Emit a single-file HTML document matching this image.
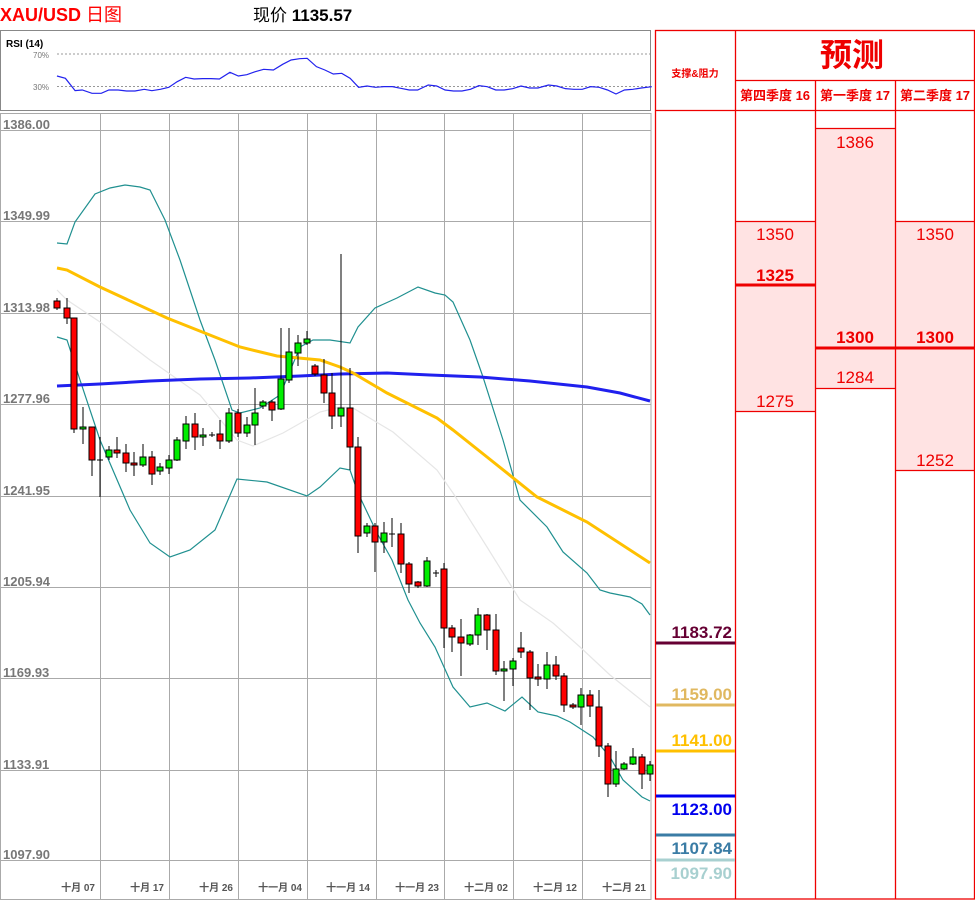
<!DOCTYPE html>
<html><head><meta charset="utf-8"><style>
html,body{margin:0;padding:0;background:#fff;width:975px;height:900px;overflow:hidden}
svg{display:block}
text{font-family:"Liberation Sans","Noto Sans CJK SC",sans-serif}
</style></head><body>
<svg width="975" height="900" viewBox="0 0 975 900" xmlns="http://www.w3.org/2000/svg">
<text x="0" y="21" font-size="18" font-weight="bold" fill="#f00">XAU/USD <tspan font-weight="normal">日图</tspan></text>
<text x="253" y="21" font-size="17" fill="#000">现价 <tspan font-weight="bold">1135.57</tspan></text>

<rect x="0.5" y="30.5" width="650" height="80" fill="#fff" stroke="#888"/>
<text x="6" y="47" font-size="10" font-weight="bold" fill="#000">RSI (14)</text>
<text x="33" y="58" font-size="8" fill="#777">70%</text>
<text x="33" y="90" font-size="8" fill="#777">30%</text>
<line x1="57" y1="54" x2="650" y2="54" stroke="#777" stroke-dasharray="2,2" stroke-width="0.8"/>
<line x1="57" y1="86.5" x2="650" y2="86.5" stroke="#777" stroke-dasharray="2,2" stroke-width="0.8"/>
<g transform="scale(0.4219,0.3333)">
<polyline vector-effect="non-scaling-stroke" fill="none" stroke="#2222ee" stroke-width="1.2" points="135,228 155,235 178,272 195,270 218,280 240,280 258,270 280,270 300,273 320,273 342,268 360,272 380,268 400,262 420,245 440,232 460,237 480,236 500,236 520,237 545,217 565,228 585,224 605,215 625,208 648,210 670,193 690,180 710,176 728,175 750,200 770,210 790,222 810,220 830,235 850,262 870,258 890,262 910,260 930,260 950,265 970,270 990,270 1015,255 1035,258 1055,270 1075,273 1095,273 1115,268 1135,257 1155,260 1175,270 1195,270 1215,266 1235,258 1255,264 1275,264 1300,255 1320,258 1340,266 1360,268 1380,268 1400,260 1420,262 1440,270 1460,282 1480,270 1500,268 1520,264 1545,260"/>
</g>

<rect x="0.5" y="113.5" width="650.5" height="786" fill="#fff" stroke="#aaa"/>
<g stroke="#aaa" stroke-width="1">
<line x1="1" y1="130.5" x2="651" y2="130.5"/>
<line x1="1" y1="221.5" x2="651" y2="221.5"/>
<line x1="1" y1="313.5" x2="651" y2="313.5"/>
<line x1="1" y1="404.5" x2="651" y2="404.5"/>
<line x1="1" y1="496.5" x2="651" y2="496.5"/>
<line x1="1" y1="587.5" x2="651" y2="587.5"/>
<line x1="1" y1="678.5" x2="651" y2="678.5"/>
<line x1="1" y1="770.5" x2="651" y2="770.5"/>
<line x1="1" y1="860.5" x2="651" y2="860.5"/>
<line x1="100.5" y1="114" x2="100.5" y2="899"/>
<line x1="169.5" y1="114" x2="169.5" y2="899"/>
<line x1="238.5" y1="114" x2="238.5" y2="899"/>
<line x1="307.5" y1="114" x2="307.5" y2="899"/>
<line x1="376.5" y1="114" x2="376.5" y2="899"/>
<line x1="444.5" y1="114" x2="444.5" y2="899"/>
<line x1="513.5" y1="114" x2="513.5" y2="899"/>
<line x1="582.5" y1="114" x2="582.5" y2="899"/>
</g>
<g font-size="13" font-weight="bold" fill="#777">
<text x="3" y="129">1386.00</text>
<text x="3" y="220">1349.99</text>
<text x="3" y="312">1313.98</text>
<text x="3" y="403">1277.96</text>
<text x="3" y="495">1241.95</text>
<text x="3" y="586">1205.94</text>
<text x="3" y="677">1169.93</text>
<text x="3" y="769">1133.91</text>
<text x="3" y="859">1097.90</text>
</g>
<g font-size="10" font-weight="bold" fill="#555" text-anchor="end">
<text x="95" y="891">十月 07</text>
<text x="164" y="891">十月 17</text>
<text x="233" y="891">十月 26</text>
<text x="302" y="891">十一月 04</text>
<text x="370" y="891">十一月 14</text>
<text x="439" y="891">十一月 23</text>
<text x="508" y="891">十二月 02</text>
<text x="577" y="891">十二月 12</text>
<text x="646" y="891">十二月 21</text>
</g>

<polyline fill="none" stroke="#e6e6e6" stroke-width="1.2" points="57,290 67,300 100,322 150,360 200,395 237,440 253,446 283,433 320,412 340,407 353,408 393,432 437,470 453,493 487,547 520,600 553,623 580,647 610,675 650,707"/>
<polyline fill="none" stroke="#209090" stroke-width="1.2" points="57,243 67,244 75,222 95,194 110,188 125,185 140,187 150,190 165,220 180,260 200,320 215,360 232,410 240,413 260,408 280,395 300,347 313,340 330,340 350,343 358,327 375,308 397,298 418,287 435,293 445,295 453,302 470,340 483,377 503,440 520,500 547,527 563,552 587,573 600,590 610,593 630,597 642,604 650,615"/>
<polyline fill="none" stroke="#209090" stroke-width="1.2" points="57,337 67,340 80,380 100,440 130,510 150,543 170,557 190,550 215,530 237,479 267,482 307,496 320,487 340,468 350,470 358,493 377,533 392,560 408,600 420,623 435,647 453,687 470,707 487,703 505,711 522,697 538,712 557,716 570,722 593,737 610,757 623,780 642,797 650,801"/>
<polyline fill="none" stroke="#2020ee" stroke-width="3" points="57,386 100,384 150,381 200,379 250,378 300,376 340,374 387,373 430,375 480,377 530,381 587,387 620,393 650,401"/>
<polyline fill="none" stroke="#ffc000" stroke-width="3" points="57,268 67,270 100,287 167,318 240,347 277,356 320,360 340,367 353,373 387,393 437,418 453,430 487,457 537,497 587,522 650,563"/>

<g stroke="#000" stroke-width="1">
<line x1="57" y1="298" x2="57" y2="310"/><rect x="54" y="301" width="6" height="7" fill="#f00"/>
<line x1="67" y1="298" x2="67" y2="324"/><rect x="64" y="308" width="6" height="10" fill="#f00"/>
<line x1="74" y1="318" x2="74" y2="433"/><rect x="71" y="318" width="6" height="111" fill="#f00"/>
<line x1="83" y1="407" x2="83" y2="444"/><rect x="80" y="427" width="6" height="2" fill="#0e0"/>
<line x1="92" y1="427" x2="92" y2="476"/><rect x="89" y="427" width="6" height="33" fill="#f00"/>
<line x1="100" y1="437" x2="100" y2="497"/><line x1="97" y1="460" x2="103" y2="460"/>
<line x1="109" y1="446" x2="109" y2="460"/><rect x="106" y="450" width="6" height="7" fill="#0e0"/>
<line x1="117" y1="437" x2="117" y2="458"/><rect x="114" y="450" width="6" height="3" fill="#f00"/>
<line x1="126" y1="444" x2="126" y2="472"/><rect x="123" y="453" width="6" height="10" fill="#f00"/>
<line x1="134" y1="452" x2="134" y2="476"/><rect x="131" y="463" width="6" height="2" fill="#f00"/>
<line x1="143" y1="444" x2="143" y2="467"/><rect x="140" y="457" width="6" height="8" fill="#0e0"/>
<line x1="152" y1="451" x2="152" y2="485"/><rect x="149" y="457" width="6" height="17" fill="#f00"/>
<line x1="160" y1="463" x2="160" y2="475"/><rect x="157" y="467" width="6" height="4" fill="#0e0"/>
<line x1="169" y1="455" x2="169" y2="474"/><rect x="166" y="460" width="6" height="8" fill="#0e0"/>
<line x1="177" y1="437" x2="177" y2="461"/><rect x="174" y="440" width="6" height="20" fill="#0e0"/>
<line x1="186" y1="416" x2="186" y2="449"/><rect x="183" y="424" width="6" height="17" fill="#0e0"/>
<line x1="195" y1="413" x2="195" y2="450"/><rect x="192" y="424" width="6" height="13" fill="#f00"/>
<line x1="203" y1="428" x2="203" y2="446"/><rect x="200" y="435" width="6" height="2" fill="#0e0"/>
<line x1="212" y1="432" x2="212" y2="437"/><line x1="209" y1="435" x2="215" y2="435"/>
<line x1="220" y1="420" x2="220" y2="449"/><rect x="217" y="434" width="6" height="7" fill="#f00"/>
<line x1="229" y1="408" x2="229" y2="443"/><rect x="226" y="413" width="6" height="28" fill="#0e0"/>
<line x1="238" y1="409" x2="238" y2="437"/><rect x="235" y="413" width="6" height="20" fill="#f00"/>
<line x1="247" y1="417" x2="247" y2="437"/><rect x="244" y="425" width="6" height="8" fill="#0e0"/>
<line x1="255" y1="388" x2="255" y2="445"/><rect x="252" y="413" width="6" height="12" fill="#0e0"/>
<line x1="263" y1="400" x2="263" y2="409"/><rect x="260" y="402" width="6" height="4" fill="#0e0"/>
<line x1="272" y1="400" x2="272" y2="421"/><rect x="269" y="402" width="6" height="8" fill="#f00"/>
<line x1="281" y1="328" x2="281" y2="410"/><rect x="278" y="379" width="6" height="30" fill="#0e0"/>
<line x1="289" y1="328" x2="289" y2="383"/><rect x="286" y="352" width="6" height="28" fill="#0e0"/>
<line x1="298" y1="335" x2="298" y2="366"/><rect x="295" y="343" width="6" height="10" fill="#0e0"/>
<line x1="307" y1="331" x2="307" y2="345"/><rect x="304" y="339" width="6" height="4" fill="#0e0"/>
<line x1="315" y1="364" x2="315" y2="376"/><rect x="312" y="366" width="6" height="8" fill="#f00"/>
<line x1="324" y1="359" x2="324" y2="403"/><rect x="321" y="375" width="6" height="18" fill="#f00"/>
<line x1="332" y1="373" x2="332" y2="429"/><rect x="329" y="393" width="6" height="23" fill="#f00"/>
<line x1="341" y1="254" x2="341" y2="427"/><rect x="338" y="408" width="6" height="8" fill="#0e0"/>
<line x1="350" y1="368" x2="350" y2="470"/><rect x="347" y="408" width="6" height="39" fill="#f00"/>
<line x1="358" y1="437" x2="358" y2="553"/><rect x="355" y="447" width="6" height="89" fill="#f00"/>
<line x1="367" y1="523" x2="367" y2="537"/><rect x="364" y="526" width="6" height="7" fill="#0e0"/>
<line x1="375" y1="523" x2="375" y2="572"/><rect x="372" y="526" width="6" height="16" fill="#f00"/>
<line x1="384" y1="522" x2="384" y2="553"/><rect x="381" y="533" width="6" height="9" fill="#0e0"/>
<line x1="392" y1="518" x2="392" y2="547"/><line x1="389" y1="534" x2="395" y2="534"/>
<line x1="401" y1="523" x2="401" y2="573"/><rect x="398" y="534" width="6" height="30" fill="#f00"/>
<line x1="409" y1="562" x2="409" y2="593"/><rect x="406" y="564" width="6" height="20" fill="#f00"/>
<line x1="418" y1="581" x2="418" y2="588"/><rect x="415" y="582" width="6" height="4" fill="#f00"/>
<line x1="427" y1="557" x2="427" y2="587"/><rect x="424" y="561" width="6" height="25" fill="#0e0"/>
<line x1="436" y1="570" x2="436" y2="577"/><line x1="433" y1="573" x2="439" y2="573"/>
<line x1="444" y1="563" x2="444" y2="648"/><rect x="441" y="569" width="6" height="59" fill="#f00"/>
<line x1="452" y1="625" x2="452" y2="652"/><rect x="449" y="628" width="6" height="9" fill="#f00"/>
<line x1="461" y1="619" x2="461" y2="676"/><rect x="458" y="637" width="6" height="6" fill="#f00"/>
<line x1="470" y1="634" x2="470" y2="646"/><rect x="467" y="635" width="6" height="9" fill="#0e0"/>
<line x1="478" y1="608" x2="478" y2="645"/><rect x="475" y="615" width="6" height="20" fill="#0e0"/>
<line x1="487" y1="614" x2="487" y2="650"/><rect x="484" y="615" width="6" height="15" fill="#f00"/>
<line x1="496" y1="614" x2="496" y2="675"/><rect x="493" y="630" width="6" height="41" fill="#f00"/>
<line x1="504" y1="661" x2="504" y2="701"/><rect x="501" y="669" width="6" height="2" fill="#0e0"/>
<line x1="513" y1="658" x2="513" y2="686"/><rect x="510" y="661" width="6" height="8" fill="#0e0"/>
<line x1="521" y1="632" x2="521" y2="658"/><rect x="518" y="648" width="6" height="4" fill="#f00"/>
<line x1="530" y1="650" x2="530" y2="710"/><rect x="527" y="652" width="6" height="26" fill="#f00"/>
<line x1="538" y1="664" x2="538" y2="686"/><rect x="535" y="677" width="6" height="2" fill="#f00"/>
<line x1="547" y1="652" x2="547" y2="689"/><rect x="544" y="665" width="6" height="14" fill="#0e0"/>
<line x1="556" y1="656" x2="556" y2="680"/><rect x="553" y="665" width="6" height="11" fill="#f00"/>
<line x1="564" y1="673" x2="564" y2="712"/><rect x="561" y="676" width="6" height="29" fill="#f00"/>
<line x1="573" y1="703" x2="573" y2="709"/><rect x="570" y="705" width="6" height="2" fill="#f00"/>
<line x1="581" y1="688" x2="581" y2="725"/><rect x="578" y="695" width="6" height="12" fill="#0e0"/>
<line x1="590" y1="690" x2="590" y2="717"/><rect x="587" y="695" width="6" height="11" fill="#f00"/>
<line x1="599" y1="690" x2="599" y2="757"/><rect x="596" y="707" width="6" height="39" fill="#f00"/>
<line x1="608" y1="743" x2="608" y2="797"/><rect x="605" y="746" width="6" height="38" fill="#f00"/>
<line x1="616" y1="751" x2="616" y2="787"/><rect x="613" y="769" width="6" height="15" fill="#0e0"/>
<line x1="624" y1="762" x2="624" y2="770"/><rect x="621" y="764" width="6" height="5" fill="#0e0"/>
<line x1="633" y1="748" x2="633" y2="765"/><rect x="630" y="757" width="6" height="7" fill="#0e0"/>
<line x1="642" y1="754" x2="642" y2="789"/><rect x="639" y="757" width="6" height="17" fill="#f00"/>
<line x1="650" y1="761" x2="650" y2="781"/><rect x="647" y="765" width="6" height="9" fill="#0e0"/>
</g>

<rect x="816" y="128" width="79" height="260" fill="#ffe3e3"/>
<rect x="736" y="221" width="79" height="190" fill="#ffe3e3"/>
<rect x="896" y="221" width="79" height="249" fill="#ffe3e3"/>
<g stroke="#e00" stroke-width="1.3" fill="none">
<rect x="655.5" y="30.5" width="319" height="868.5"/>
<line x1="735.5" y1="30" x2="735.5" y2="899"/>
<line x1="815.5" y1="80" x2="815.5" y2="899"/>
<line x1="895.5" y1="80" x2="895.5" y2="899"/>
<line x1="735" y1="80.5" x2="975" y2="80.5"/>
<line x1="655" y1="110.5" x2="975" y2="110.5"/>
<line x1="815" y1="128.5" x2="895" y2="128.5"/>
<line x1="735" y1="221.5" x2="815" y2="221.5"/>
<line x1="895" y1="221.5" x2="975" y2="221.5"/>
<line x1="735" y1="411.5" x2="815" y2="411.5"/>
<line x1="815" y1="388.5" x2="895" y2="388.5"/>
<line x1="895" y1="470.5" x2="975" y2="470.5"/>
</g>
<g stroke="#e00" stroke-width="3">
<line x1="736" y1="285" x2="815" y2="285"/>
<line x1="816" y1="348" x2="975" y2="348"/>
</g>
<text x="695" y="77" font-size="10" font-weight="bold" fill="#e00" text-anchor="middle">支撑&amp;阻力</text>
<text x="852" y="66" font-size="32" fill="#e00" text-anchor="middle" font-family="Noto Serif CJK SC,serif" font-weight="bold">预测</text>
<g font-size="13" font-weight="bold" fill="#e00" text-anchor="middle">
<text x="775" y="100">第四季度 16</text>
<text x="855" y="100">第一季度 17</text>
<text x="935" y="100">第二季度 17</text>
</g>
<g font-size="17" fill="#e00" text-anchor="middle">
<text x="855" y="148">1386</text>
<text x="775" y="240">1350</text>
<text x="935" y="240">1350</text>
<text x="775" y="281" font-weight="bold">1325</text>
<text x="855" y="343" font-weight="bold">1300</text>
<text x="935" y="343" font-weight="bold">1300</text>
<text x="855" y="383">1284</text>
<text x="775" y="407">1275</text>
<text x="935" y="466">1252</text>
</g>
<g stroke-width="3">
<line x1="656" y1="643" x2="735" y2="643" stroke="#660033"/>
<line x1="656" y1="705" x2="735" y2="705" stroke="#e0b860"/>
<line x1="656" y1="751" x2="735" y2="751" stroke="#ffc000"/>
<line x1="656" y1="796" x2="735" y2="796" stroke="#0000ee"/>
<line x1="656" y1="835" x2="735" y2="835" stroke="#3a7ca5"/>
<line x1="656" y1="860" x2="735" y2="860" stroke="#a8d0d0"/>
</g>
<g font-size="17" font-weight="bold" text-anchor="end">
<text x="732" y="638" fill="#660033">1183.72</text>
<text x="732" y="700" fill="#e0b860">1159.00</text>
<text x="732" y="746" fill="#ffc000">1141.00</text>
<text x="732" y="815" fill="#0000ee">1123.00</text>
<text x="732" y="854" fill="#3a7ca5">1107.84</text>
<text x="732" y="879" fill="#a8d0d0">1097.90</text>
</g>
</svg>
</body></html>
